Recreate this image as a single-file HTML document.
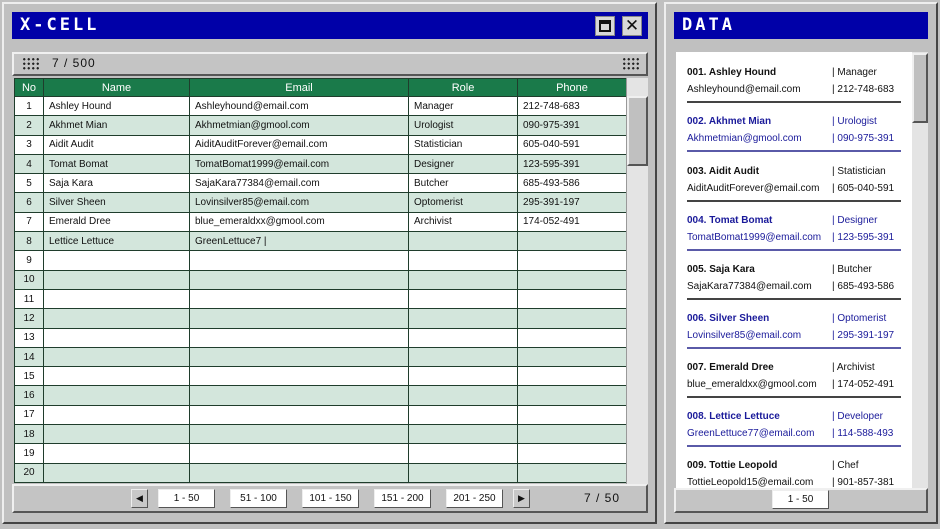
<!DOCTYPE html>
<html><head><style>
*{box-sizing:border-box;margin:0;padding:0}
body{width:940px;height:529px;background:#c0c0c0;position:relative;overflow:hidden;font-family:"Liberation Sans",sans-serif;font-size:10px;color:#111}
.abs{position:absolute}
.title{background:#0000a8;color:#fff;font-family:"DejaVu Sans Mono","Liberation Mono",monospace;font-weight:bold;font-size:17px;letter-spacing:3px;padding-left:8px;line-height:27px}
.bev{border:2px solid;border-color:#f0f0f0 #555 #555 #f0f0f0}
table{border-collapse:collapse;table-layout:fixed}
td,th{border:1px solid #1f3d2c;height:19.3px;padding-left:5px;white-space:nowrap;overflow:hidden;font-weight:normal}
th{background:#1a7a4a;color:#fff;text-align:center;padding:0;font-size:11px;height:18px}
tr:nth-child(odd) td{background:#d3e6dc}
tr:nth-child(even) td{background:#fff}
td:first-child{text-align:center;padding:0}
.btn{position:absolute;top:489px;height:19px;background:#fff;border:1px solid;border-color:#eee #555 #555 #eee;text-align:center;line-height:17px;font-size:10px}
.ent{position:absolute;left:687px;width:215px;font-size:10px}
.ent .n{position:absolute;top:0;left:0;font-weight:bold}
.ent .e{position:absolute;top:17px;left:0}
.ent .r{position:absolute;top:0;left:145px}
.ent .p{position:absolute;top:17px;left:145px}
.ent .l{position:absolute;top:34px;left:0;width:214px;height:2px;background:#444}
.blue{color:#1a1a9a}.blue .l{background:#5a5aa8}
.grip{position:absolute;width:18px;height:14px;background:radial-gradient(circle,#222 1px,transparent 1.3px) 0 0/4.5px 4.5px}
</style></head><body>
<div class="abs bev" style="left:2px;top:2px;width:655px;height:522px;border-color:#eee #444 #444 #eee"></div>
<div class="abs bev" style="left:664px;top:2px;width:274px;height:522px;border-color:#eee #444 #444 #eee"></div>

<div class="abs title" style="left:12px;top:12px;width:636px;height:27px">X-CELL</div>
<div class="abs" style="left:595px;top:16px;width:20px;height:20px;background:#d8d8d8;border:1px solid #888"><div style="margin:3px;width:12px;height:12px;border:2px solid #111;border-top-width:4px"></div></div>
<div class="abs" style="left:622px;top:16px;width:20px;height:20px;background:#d8d8d8;border:1px solid #888;text-align:center;line-height:18px;font-size:17px">✕</div>

<div class="abs bev" style="left:12px;top:52px;width:636px;height:24px;background:#c4c4c4"></div>
<div class="grip" style="left:22px;top:57px"></div>
<div class="abs" style="left:52px;top:56px;font-size:12px;letter-spacing:1px">7 / 500</div>
<div class="grip" style="left:622px;top:57px"></div>

<table class="abs" style="left:14px;top:78px;width:612px">
<colgroup><col style="width:29px"><col style="width:146px"><col style="width:219px"><col style="width:109px"><col style="width:109px"></colgroup>
<tr><th>No</th><th>Name</th><th>Email</th><th>Role</th><th>Phone</th></tr>
<tr><td>1</td><td>Ashley Hound</td><td>Ashleyhound@email.com</td><td>Manager</td><td>212-748-683</td></tr>
<tr><td>2</td><td>Akhmet Mian</td><td>Akhmetmian@gmool.com</td><td>Urologist</td><td>090-975-391</td></tr>
<tr><td>3</td><td>Aidit Audit</td><td>AiditAuditForever@email.com</td><td>Statistician</td><td>605-040-591</td></tr>
<tr><td>4</td><td>Tomat Bomat</td><td>TomatBomat1999@email.com</td><td>Designer</td><td>123-595-391</td></tr>
<tr><td>5</td><td>Saja Kara</td><td>SajaKara77384@email.com</td><td>Butcher</td><td>685-493-586</td></tr>
<tr><td>6</td><td>Silver Sheen</td><td>Lovinsilver85@email.com</td><td>Optomerist</td><td>295-391-197</td></tr>
<tr><td>7</td><td>Emerald Dree</td><td>blue_emeraldxx@gmool.com</td><td>Archivist</td><td>174-052-491</td></tr>
<tr><td>8</td><td>Lettice Lettuce</td><td>GreenLettuce7 |</td><td></td><td></td></tr>
<tr><td>9</td><td></td><td></td><td></td><td></td></tr>
<tr><td>10</td><td></td><td></td><td></td><td></td></tr>
<tr><td>11</td><td></td><td></td><td></td><td></td></tr>
<tr><td>12</td><td></td><td></td><td></td><td></td></tr>
<tr><td>13</td><td></td><td></td><td></td><td></td></tr>
<tr><td>14</td><td></td><td></td><td></td><td></td></tr>
<tr><td>15</td><td></td><td></td><td></td><td></td></tr>
<tr><td>16</td><td></td><td></td><td></td><td></td></tr>
<tr><td>17</td><td></td><td></td><td></td><td></td></tr>
<tr><td>18</td><td></td><td></td><td></td><td></td></tr>
<tr><td>19</td><td></td><td></td><td></td><td></td></tr>
<tr><td>20</td><td></td><td></td><td></td><td></td></tr>
</table>
<div class="abs" style="left:626px;top:78px;width:22px;height:406px;background:#e4e4e4;border-left:1px solid #999"></div>
<div class="abs bev" style="left:627px;top:96px;width:21px;height:70px;background:#c0c0c0"></div>

<div class="abs bev" style="left:12px;top:484px;width:636px;height:29px;background:#c4c4c4"></div>
<div class="btn" style="left:131px;width:17px;background:#c8c8c8;font-size:9px">◀</div>
<div class="btn" style="left:158px;width:57px">1 - 50</div>
<div class="btn" style="left:230px;width:57px">51 - 100</div>
<div class="btn" style="left:302px;width:57px">101 - 150</div>
<div class="btn" style="left:374px;width:57px">151 - 200</div>
<div class="btn" style="left:446px;width:57px">201 - 250</div>
<div class="btn" style="left:513px;width:17px;background:#c8c8c8;font-size:9px">▶</div>
<div class="abs" style="left:584px;top:491px;font-size:12px;letter-spacing:1px">7 / 50</div>

<div class="abs title" style="left:674px;top:12px;width:254px;height:27px">DATA</div>
<div class="abs" style="left:676px;top:52px;width:236px;height:436px;background:#fff;overflow:hidden"></div>
<div class="abs" style="left:912px;top:52px;width:16px;height:436px;background:#e4e4e4"></div>
<div class="abs bev" style="left:912px;top:53px;width:16px;height:70px;background:#c0c0c0"></div>

<div class="ent" style="top:67px"><span class="n">001. Ashley Hound</span><span class="e">Ashleyhound@email.com</span><span class="r">| Manager</span><span class="p">| 212-748-683</span><span class="l"></span></div>
<div class="ent blue" style="top:116px"><span class="n">002. Akhmet Mian</span><span class="e">Akhmetmian@gmool.com</span><span class="r">| Urologist</span><span class="p">| 090-975-391</span><span class="l"></span></div>
<div class="ent" style="top:166px"><span class="n">003. Aidit Audit</span><span class="e">AiditAuditForever@email.com</span><span class="r">| Statistician</span><span class="p">| 605-040-591</span><span class="l"></span></div>
<div class="ent blue" style="top:215px"><span class="n">004. Tomat Bomat</span><span class="e">TomatBomat1999@email.com</span><span class="r">| Designer</span><span class="p">| 123-595-391</span><span class="l"></span></div>
<div class="ent" style="top:264px"><span class="n">005. Saja Kara</span><span class="e">SajaKara77384@email.com</span><span class="r">| Butcher</span><span class="p">| 685-493-586</span><span class="l"></span></div>
<div class="ent blue" style="top:313px"><span class="n">006. Silver Sheen</span><span class="e">Lovinsilver85@email.com</span><span class="r">| Optomerist</span><span class="p">| 295-391-197</span><span class="l"></span></div>
<div class="ent" style="top:362px"><span class="n">007. Emerald Dree</span><span class="e">blue_emeraldxx@gmool.com</span><span class="r">| Archivist</span><span class="p">| 174-052-491</span><span class="l"></span></div>
<div class="ent blue" style="top:411px"><span class="n">008. Lettice Lettuce</span><span class="e">GreenLettuce77@email.com</span><span class="r">| Developer</span><span class="p">| 114-588-493</span><span class="l"></span></div>
<div class="abs" style="left:676px;top:455px;width:236px;height:33px;overflow:hidden"><div class="ent" style="left:11px;top:5px;height:40px"><span class="n">009. Tottie Leopold</span><span class="e">TottieLeopold15@email.com</span><span class="r">| Chef</span><span class="p">| 901-857-381</span></div></div>

<div class="abs bev" style="left:674px;top:488px;width:254px;height:25px;background:#c4c4c4"></div>
<div class="btn" style="left:772px;width:57px;top:490px">1 - 50</div>
</body></html>
